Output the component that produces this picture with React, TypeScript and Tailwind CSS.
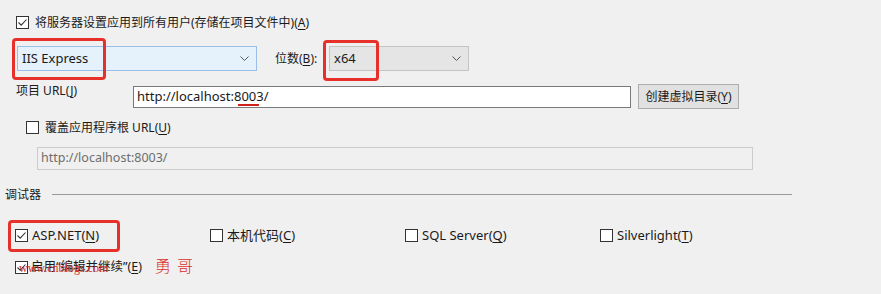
import React from "react";

const font = { fontFamily: '"Noto Sans", "Noto Sans CJK SC", sans-serif' };

function Box({ checked, className = "" }: { checked?: boolean; className?: string }) {
  return (
    <div className={`w-[13px] h-[13px] border border-[#333333] bg-white flex items-center justify-center shrink-0 ${className}`}>
      {checked && (
        <svg width="11" height="11" viewBox="0 0 11 11">
          <path d="M1.5 5.5 L4.2 8.2 L9.5 2.5" stroke="#333" strokeWidth="1.1" fill="none" />
        </svg>
      )}
    </div>
  );
}

function U({ children }: { children: React.ReactNode }) {
  return <span className="underline underline-offset-2">{children}</span>;
}

function Chevron() {
  return (
    <svg width="9" height="5" viewBox="0 0 9 5">
      <path d="M0.5 0.5 L4.5 4.5 L8.5 0.5" stroke="#555" strokeWidth="1" fill="none" />
    </svg>
  );
}

function Check({ label, checked }: { label: React.ReactNode; checked?: boolean }) {
  return (
    <div className="flex items-center w-[195px]">
      <Box checked={checked} />
      <span className="ml-[4px] leading-none">{label}</span>
    </div>
  );
}

export default function App() {
  return (
    <div className="w-[881px] h-[294px] bg-[#f0f0f0] overflow-hidden text-[12px] text-[#1a1a1a] flex flex-col" style={font}>
      <div className="mt-[16px] h-[13px] pl-[16px] flex items-center">
        <Box checked />
        <span className="ml-[6px]">将服务器设置应用到所有用户(存储在项目文件中)(<U>A</U>)</span>
      </div>

      <div className="mt-[17px] h-[25px] pl-[17px] flex items-center">
        <div className="relative w-[240px] h-[25px] bg-[#e5f1fb] border border-[#9bbfe6] flex items-center justify-between pl-[4px] pr-[7px]">
          <span className="text-[13px]">IIS Express</span>
          <Chevron />
          <div className="absolute left-[-6px] top-[-9px] w-[94px] h-[42px] border-[3px] border-[#e8302a] rounded-[4px]" />
        </div>
        <div className="ml-[18px] w-[54px]">位数(<U>B</U>):</div>
        <div className="relative w-[140px] h-[25px] bg-[#e5e5e5] border border-[#c4c4c4] flex items-center justify-between pl-[4px] pr-[7px]">
          <span className="text-[13px]">x64</span>
          <Chevron />
          <div className="absolute left-[-7px] top-[-7px] w-[56px] h-[41px] border-[3px] border-[#e8302a] rounded-[4px]" />
        </div>
      </div>

      <div className="mt-[13px] h-[25px] flex items-center">
        <div className="pl-[16px] w-[133px] self-start mt-[-2px]">项目 URL(<U>J</U>)</div>
        <div className="relative w-[498px] h-[22px] bg-white border border-[#7a7a7a] flex items-center pl-[3px] text-[13px]">
          <span>http://localhost:8003/</span>
          <div className="absolute left-[104px] top-[17px] w-[21px] h-[2px] bg-[#d0201a]" />
        </div>
        <div className="ml-[7px] w-[101px] h-[25px] bg-[#e1e1e1] border border-[#adadad] flex items-center justify-center">
          创建虚拟目录(<U>Y</U>)
        </div>
      </div>

      <div className="mt-[12px] h-[13px] pl-[26px] flex items-center">
        <Box />
        <span className="ml-[6px]">覆盖应用程序根 URL(<U>U</U>)</span>
      </div>

      <div className="mt-[13px] ml-[37px] w-[716px] h-[23px] border border-[#cccccc] flex items-center pl-[3px] text-[#6d6d6d] text-[12.5px]">
        http://localhost:8003/
      </div>

      <div className="mt-[16px] h-[17px] pl-[5px] flex items-center">
        <div className="w-[47px]">调试器</div>
        <div className="w-[740px] h-px bg-[#9a9a9a]" />
      </div>

      <div className="mt-[26px] h-[13px] pl-[15px] flex items-center text-[13px]">
        <div className="relative">
          <Check checked label={<>ASP.NET(<U>N</U>)</>} />
          <div className="absolute left-[-7px] top-[-9px] w-[112px] h-[32px] border-[3px] border-[#e8302a] rounded-[4px]" />
        </div>
        <Check label={<>本机代码(<U>C</U>)</>} />
        <Check label={<>SQL Server(<U>Q</U>)</>} />
        <Check label={<>Silverlight(<U>T</U>)</>} />
      </div>

      <div className="relative mt-[19px] h-[13px] pl-[15px] flex items-center text-[12.5px]">
        <Box checked />
        <span className="ml-[3px]">启用“编辑并继续”(<U>E</U>)</span>
        <div
          className="absolute left-[19px] top-[1px] text-[#d8302a] text-[12px] leading-none"
          style={{ fontFamily: '"Liberation Serif", serif' }}
        >
          www.cnblogs.com
        </div>
        <div
          className="absolute left-[155px] top-[-4px] text-[#d8302a] text-[16px] font-light tracking-[6px] leading-none"
          style={{ fontFamily: '"Noto Sans CJK SC", serif' }}
        >
          勇哥
        </div>
      </div>
    </div>
  );
}
